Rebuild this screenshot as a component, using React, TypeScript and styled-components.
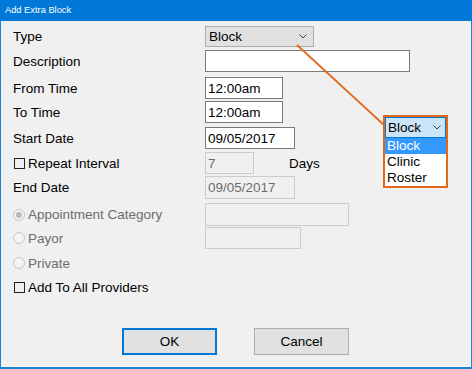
import React from "react";
import styled, { createGlobalStyle } from "styled-components";

const GlobalStyle = createGlobalStyle`
  html, body { margin: 0; padding: 0; background: #ffffff; }
  body { font-family: "Liberation Sans", Arial, sans-serif; }
  * { box-sizing: border-box; }
`;

const Chevron = () => (
  <svg width="8" height="5" viewBox="0 0 8 5">
    <path d="M0.5 0.5l3.5 3.5 3.5-3.5" fill="none" stroke="#444" strokeWidth="1" />
  </svg>
);

const App = () => {
  return (
    <>
      <GlobalStyle />
      <Window>
        <TitleBar>Add Extra Block</TitleBar>
        <Body>
          <Row $gap={0} $h={21}>
            <Label>Type</Label>
            <Select>
              <span>Block</span>
              <Chevron />
            </Select>
          </Row>
          <Row $gap={3}>
            <Label>Description</Label>
            <Input $w={205} defaultValue="" />
          </Row>
          <Row $gap={5}>
            <Label>From Time</Label>
            <Input $w={78} defaultValue="12:00am" />
          </Row>
          <Row $gap={2}>
            <Label>To Time</Label>
            <Input $w={78} defaultValue="12:00am" />
          </Row>
          <Row $gap={4}>
            <Label>Start Date</Label>
            <Input $w={90} defaultValue="09/05/2017" />
          </Row>
          <Row $gap={3}>
            <Label>
              <Check />
              Repeat Interval
            </Label>
            <Input $w={49} $disabled readOnly defaultValue="7" />
            <Days>Days</Days>
          </Row>
          <Row $gap={2} $h={23}>
            <Label>End Date</Label>
            <Input $w={90} $disabled readOnly defaultValue="09/05/2017" />
          </Row>
          <Row $gap={4} $h={23}>
            <Label $disabled>
              <Radio $checked />
              Appointment Category
            </Label>
            <Input $w={144} $disabled readOnly defaultValue="" />
          </Row>
          <Row $gap={1}>
            <Label $disabled>
              <Radio />
              Payor
            </Label>
            <Input $w={96} $disabled readOnly defaultValue="" />
          </Row>
          <Row $gap={3}>
            <Label $disabled>
              <Radio />
              Private
            </Label>
          </Row>
          <Row $gap={2}>
            <Label $wide>
              <Check />
              Add To All Providers
            </Label>
          </Row>
          <Footer>
            <Button $primary>OK</Button>
            <Button>Cancel</Button>
          </Footer>
        </Body>

        <Pointer width="472" height="369" viewBox="0 0 472 369">
          <line x1="297" y1="45" x2="384" y2="125" stroke="#e2691a" strokeWidth="1.8" />
        </Pointer>
        <Callout>
          <CalloutHead>
            <span>Block</span>
            <Chevron />
          </CalloutHead>
          <Option $selected>Block</Option>
          <Option>Clinic</Option>
          <Option>Roster</Option>
        </Callout>
      </Window>
    </>
  );
};

export default App;

const Window = styled.div`
  position: relative;
  width: 472px;
  height: 369px;
  display: flex;
  flex-direction: column;
  border: 1px solid #1883d7;
  border-top: 0;
  border-bottom-width: 2px;
  background: #f0f0f0;
`;

const TitleBar = styled.div`
  height: 21px;
  margin: 0 -1px;
  padding-left: 5px;
  background: #0078d7;
  color: #ffffff;
  font-size: 9.3px;
  line-height: 21px;
`;

const Body = styled.div`
  flex: 1;
  display: flex;
  flex-direction: column;
  padding: 5px 0 0 12px;
  border-right: 1px solid #fbfbfb;
  border-bottom: 1px solid #fbfbfb;
  font-size: 13.5px;
  color: #000;
`;

const Row = styled.div<{ $gap: number; $h?: number }>`
  display: flex;
  align-items: center;
  margin-top: ${(p) => p.$gap}px;
  height: ${(p) => p.$h ?? 22}px;
`;

const Label = styled.div<{ $disabled?: boolean; $wide?: boolean }>`
  display: flex;
  align-items: center;
  width: ${(p) => (p.$wide ? "auto" : "192px")};
  color: ${(p) => (p.$disabled ? "#6d6d6d" : "#000")};
  white-space: nowrap;
`;

const Check = styled.span`
  width: 11px;
  height: 11px;
  margin: 0 3px 0 1px;
  border: 1px solid #222;
`;

const Radio = styled.span<{ $checked?: boolean }>`
  position: relative;
  width: 12px;
  height: 12px;
  margin-right: 3px;
  border: 1px solid #c4c4c4;
  border-radius: 50%;
  background: #f4f4f4;

  &::after {
    content: "";
    display: ${(p) => (p.$checked ? "block" : "none")};
    position: absolute;
    left: 2px;
    top: 2px;
    width: 6px;
    height: 6px;
    border-radius: 50%;
    background: #b8b8b8;
  }
`;

const Select = styled.div`
  display: flex;
  align-items: center;
  justify-content: space-between;
  width: 109px;
  height: 21px;
  padding: 0 6px 0 3px;
  background: #e1e1e1;
  border: 1px solid #adadad;
`;

const Input = styled.input<{ $w: number; $disabled?: boolean }>`
  width: ${(p) => p.$w}px;
  height: 100%;
  margin: 0;
  padding: 0 2px;
  font: inherit;
  font-size: 13.5px;
  outline: none;
  color: ${(p) => (p.$disabled ? "#6d6d6d" : "#000")};
  background: ${(p) => (p.$disabled ? "#f0f0f0" : "#ffffff")};
  border: 1px solid ${(p) => (p.$disabled ? "#cccccc" : "#7a7a7a")};
`;

const Days = styled.span`
  margin-left: 35px;
`;

const Footer = styled.div`
  display: flex;
  justify-content: center;
  gap: 37px;
  margin: 30px 0 0 -12px;
`;

const Button = styled.button<{ $primary?: boolean }>`
  width: 95px;
  height: 27px;
  padding: 0;
  font: inherit;
  font-size: 13.5px;
  color: #000;
  background: #e1e1e1;
  border: ${(p) => (p.$primary ? "2px solid #0078d7" : "1px solid #adadad")};
`;

const Pointer = styled.svg`
  position: absolute;
  left: -1px;
  top: 0;
  pointer-events: none;
`;

const Callout = styled.div`
  position: absolute;
  left: 382px;
  top: 115px;
  width: 65px;
  height: 73px;
  border: 2px solid #e2691a;
  background: #ffffff;
  font-size: 13.5px;
`;

const CalloutHead = styled.div`
  display: flex;
  align-items: center;
  justify-content: space-between;
  height: 21px;
  padding: 0 4px 0 2px;
  background: #cce4f7;
  border: 1px solid #0078d7;
`;

const Option = styled.div<{ $selected?: boolean }>`
  height: 16px;
  line-height: 16px;
  padding-left: 2px;
  color: ${(p) => (p.$selected ? "#ffffff" : "#000")};
  background: ${(p) => (p.$selected ? "#3399ff" : "transparent")};
`;
